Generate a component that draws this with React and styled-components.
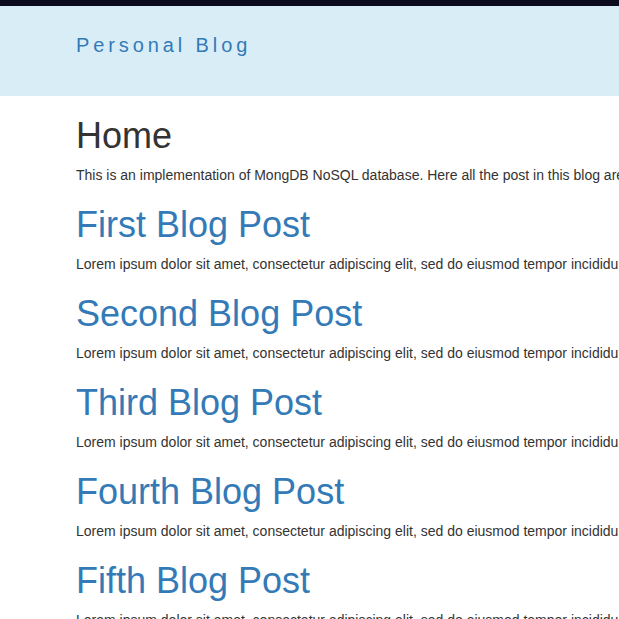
import styled, { createGlobalStyle } from "styled-components";

const GlobalStyle = createGlobalStyle`
  html, body {
    margin: 0;
    padding: 0;
    overflow: hidden;
  }
  body {
    font-family: "Liberation Sans", Arial, sans-serif;
    font-size: 14px;
    line-height: 1.42857;
    color: #333;
    background: #fff;
  }
`;

const Page = styled.div`
  width: 1170px;
`;

const TopBar = styled.div`
  height: 6px;
  background-color: #0c0b1d;
`;

const Header = styled.header`
  display: flex;
  align-items: flex-start;
  box-sizing: border-box;
  height: 90px;
  padding: 29px 0 0 76px;
  background-color: #d9edf7;
`;

const Brand = styled.a`
  font-size: 20px;
  line-height: 20px;
  letter-spacing: 3.9px;
  color: #337ab7;
  text-decoration: none;
`;

const Container = styled.main`
  padding-left: 76px;
`;

const Title = styled.h1`
  margin: 20px 0 10px;
  font-size: 36px;
  font-weight: 500;
  line-height: 39px;
  color: ${(p) => (p.$link ? "#337ab7" : "#333")};
`;

const Text = styled.p`
  margin: 0 0 10px;
  line-height: 20px;
  white-space: nowrap;
`;

const lorem =
  "Lorem ipsum dolor sit amet, consectetur adipiscing elit, sed do eiusmod tempor incididunt ut labore et dolore magna aliqua.";

const posts = [
  "First Blog Post",
  "Second Blog Post",
  "Third Blog Post",
  "Fourth Blog Post",
  "Fifth Blog Post",
];

function App() {
  return (
    <>
      <GlobalStyle />
      <Page>
        <TopBar />
        <Header>
          <Brand href="#">Personal Blog</Brand>
        </Header>
        <Container>
          <Title>Home</Title>
          <Text>
            This is an implementation of MongDB NoSQL database. Here all the post in this blog are stored in a database.
          </Text>
          {posts.map((title) => (
            <div key={title}>
              <Title $link>{title}</Title>
              <Text>{lorem}</Text>
            </div>
          ))}
        </Container>
      </Page>
    </>
  );
}

export default App;
